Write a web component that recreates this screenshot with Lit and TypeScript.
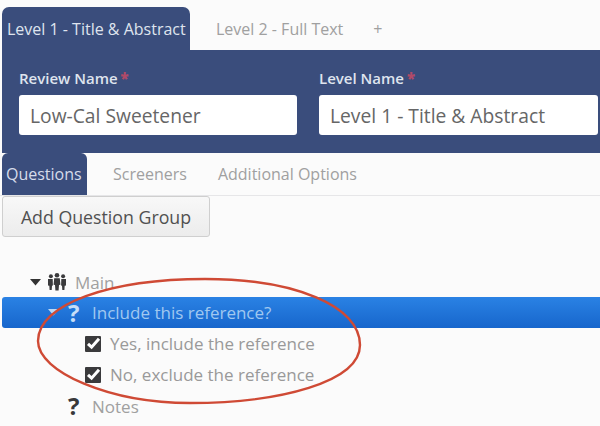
import { LitElement, html, css } from "lit";
import { customElement } from "lit/decorators.js";

const caret = html`<svg class="caret" viewBox="0 0 11 7" width="11" height="7"><path d="M0 0H11L5.5 6.5Z" fill="currentColor"/></svg>`;
const question = html`<span class="q">?</span>`;
const check = html`<svg class="check" viewBox="0 0 16 16" width="16" height="16"><rect width="16" height="16" rx="1" fill="#3a3a3c"/><path d="M3 7.8L6.6 11.2L14 2.8" fill="none" stroke="#fff" stroke-width="3"/></svg>`;
const group = html`<svg class="group" viewBox="0 0 18 18" width="18" height="18" fill="#3a3a3c"><circle cx="9" cy="2.3" r="2.3"/><path d="M6.2 5.2h5.6l.6 6.6-1.4.3-.4 5.4H7.4l-.4-5.4-1.4-.3z"/><circle cx="2.9" cy="3.2" r="2"/><path d="M0 6h4.7l.2 6.4-.9.3-.3 4.3H1.6l-.3-4.3-1.3-.3z"/><circle cx="15.1" cy="3.2" r="2"/><path d="M13.3 6H18v6.4l-1.3.3-.3 4.3h-2.1l-.3-4.3-.9-.3z"/></svg>`;

@customElement("app-root")
export class AppRoot extends LitElement {
  static styles = css`
    :host {
      display: block;
      position: relative;
      width: 600px;
      height: 426px;
      overflow: hidden;
      background: #fbfbfb;
      font-family: "Open Sans", "Liberation Sans", sans-serif;
      font-size: 16px;
      color: #a0a0a0;
    }
    .tabs { display: flex; align-items: stretch; height: 43px; padding: 7px 0 0 2px; }
    .tab { display: flex; align-items: center; padding: 0 26px; }
    .tab.active {
      width: 188px; box-sizing: border-box; padding: 0 0 0 5px;
      background: #3a4d7c; color: #dfe4ee; border-radius: 7px 7px 0 0; white-space: nowrap;
    }
    .tab.plus { padding: 0 0 0 4px; }
    .panel {
      margin-left: 2px; height: 103px; box-sizing: border-box; background: #3a4d7c;
      display: flex; gap: 22px; padding: 18px 2px 0 17px;
    }
    .field { width: 278px; }
    .field + .field { width: 279px; }
    label { display: block; height: 27px; line-height: 21px; color: #dfe4ee; font-weight: 600; font-size: 15px; }
    label b { color: #b04a68; margin-left: 3px; }
    .input {
      height: 40px; box-sizing: border-box; background: #fff; border-radius: 3px;
      display: flex; align-items: center; padding-left: 11px;
      color: #666; font-size: 19.25px;
    }
    .subtabs { display: flex; height: 42px; padding-left: 2px; border-bottom: 1px solid #e6e6e8; box-sizing: content-box; }
    .sub { display: flex; align-items: center; padding: 0 0 0 26px; }
    .sub.active { width: 85px; box-sizing: border-box; padding: 0 0 0 4px; background: #3a4d7c; color: #d6dcea; border-radius: 6px 6px 0 0; white-space: nowrap; }
    .sub + .sub + .sub { padding-left: 31px; }
    .btn {
      margin: 0 0 0 2px; width: 208px; height: 41px; box-sizing: border-box;
      border: 1px solid #cfcfcf; border-radius: 3px;
      background: linear-gradient(#f8f8f8, #ececec);
      display: flex; align-items: center; justify-content: center;
      color: #505050; font-size: 17.75px;
    }
    .tree { margin-top: 30px; font-size: 17px; }
    .row { display: flex; align-items: center; height: 30px; white-space: nowrap; }
    .row.main { padding-left: 30px; gap: 7px; }
    .row.main .caret { color: #333; }
    .row.main span { margin-left: 2px; }
    .row.sel {
      margin-left: 2px; height: 31px; padding-left: 46px; background: linear-gradient(#2a82e4, #1766cc);
      border-radius: 3px 0 0 3px; color: #a0c8f0;
    }
    .row.sel .caret { color: #bcd8f5; margin-right: 9px; }
    .row.sel .q { color: #c6def7; }
    .row.opt { padding-left: 85px; height: 31px; color: #999; }
    .row.opt .check { margin-right: 9px; }
    .row.notes { padding-left: 68px; height: 32px; }
    .q { font-weight: 700; font-size: 24px; color: #38383a; margin-right: 12px; line-height: 1; width: 12px; }
    .ellipse { position: absolute; left: 0; top: 0; pointer-events: none; }
  `;

  render() {
    return html`
      <div class="tabs">
        <div class="tab active">Level 1 - Title &amp; Abstract</div>
        <div class="tab">Level 2 - Full Text</div>
        <div class="tab plus">+</div>
      </div>
      <div class="panel">
        <div class="field"><label>Review Name<b>*</b></label><div class="input">Low-Cal Sweetener</div></div>
        <div class="field"><label>Level Name<b>*</b></label><div class="input">Level 1 - Title &amp; Abstract</div></div>
      </div>
      <div class="subtabs">
        <div class="sub active">Questions</div>
        <div class="sub">Screeners</div>
        <div class="sub">Additional Options</div>
      </div>
      <div class="btn">Add Question Group</div>
      <div class="tree">
        <div class="row main">${caret}${group}<span>Main</span></div>
        <div class="row sel">${caret}${question}Include this reference?</div>
        <div class="row opt">${check}Yes, include the reference</div>
        <div class="row opt">${check}No, exclude the reference</div>
        <div class="row notes">${question}Notes</div>
      </div>
      <svg class="ellipse" width="600" height="426" viewBox="0 0 600 426">
        <path d="M38 341C38 304 110 279 205 279C295 279 360 306 360 345C360 382 280 403 190 403C110 403 38 372 38 341Z" fill="none" stroke="#cf4a35" stroke-width="2.4"/>
      </svg>
    `;
  }
}
